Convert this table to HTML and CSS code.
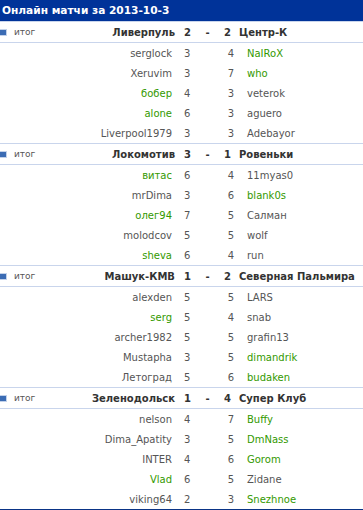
FILE: index.html
```html
<!DOCTYPE html>
<html>
<head>
<meta charset="utf-8">
<link rel="stylesheet" href="styles.css">
</head>
<body>
<div class="widget">
  <div class="title">Онлайн матчи за 2013-10-3</div>

  <div class="match">
    <div class="head"><span class="icon"></span><span class="label">итог</span><span class="home">Ливерпуль</span><span class="score"><span>2</span><span>-</span><span>2</span></span><span class="away">Центр-К</span></div>
    <div class="row"><span class="p1">serglock</span><span class="nums"><span>3</span><span>4</span></span><span class="p2 win">NaIRoX</span></div>
    <div class="row"><span class="p1">Xeruvim</span><span class="nums"><span>3</span><span>7</span></span><span class="p2 win">who</span></div>
    <div class="row"><span class="p1 win">бобер</span><span class="nums"><span>4</span><span>3</span></span><span class="p2">veterok</span></div>
    <div class="row"><span class="p1 win">alone</span><span class="nums"><span>6</span><span>3</span></span><span class="p2">aguero</span></div>
    <div class="row"><span class="p1">Liverpool1979</span><span class="nums"><span>3</span><span>3</span></span><span class="p2">Adebayor</span></div>
  </div>

  <div class="match">
    <div class="head"><span class="icon"></span><span class="label">итог</span><span class="home">Локомотив</span><span class="score"><span>3</span><span>-</span><span>1</span></span><span class="away">Ровеньки</span></div>
    <div class="row"><span class="p1 win">витас</span><span class="nums"><span>6</span><span>4</span></span><span class="p2">11myas0</span></div>
    <div class="row"><span class="p1">mrDima</span><span class="nums"><span>3</span><span>6</span></span><span class="p2 win">blank0s</span></div>
    <div class="row"><span class="p1 win">олег94</span><span class="nums"><span>7</span><span>5</span></span><span class="p2">Салман</span></div>
    <div class="row"><span class="p1">molodcov</span><span class="nums"><span>5</span><span>5</span></span><span class="p2">wolf</span></div>
    <div class="row"><span class="p1 win">sheva</span><span class="nums"><span>6</span><span>4</span></span><span class="p2">run</span></div>
  </div>

  <div class="match">
    <div class="head"><span class="icon"></span><span class="label">итог</span><span class="home">Машук-КМВ</span><span class="score"><span>1</span><span>-</span><span>2</span></span><span class="away">Северная Пальмира</span></div>
    <div class="row"><span class="p1">alexden</span><span class="nums"><span>5</span><span>5</span></span><span class="p2">LARS</span></div>
    <div class="row"><span class="p1 win">serg</span><span class="nums"><span>5</span><span>4</span></span><span class="p2">snab</span></div>
    <div class="row"><span class="p1">archer1982</span><span class="nums"><span>5</span><span>5</span></span><span class="p2">grafin13</span></div>
    <div class="row"><span class="p1">Mustapha</span><span class="nums"><span>3</span><span>5</span></span><span class="p2 win">dimandrik</span></div>
    <div class="row"><span class="p1">Летоград</span><span class="nums"><span>5</span><span>6</span></span><span class="p2 win">budaken</span></div>
  </div>

  <div class="match">
    <div class="head"><span class="icon"></span><span class="label">итог</span><span class="home">Зеленодольск</span><span class="score"><span>1</span><span>-</span><span>4</span></span><span class="away">Супер Клуб</span></div>
    <div class="row"><span class="p1">nelson</span><span class="nums"><span>4</span><span>7</span></span><span class="p2 win">Buffy</span></div>
    <div class="row"><span class="p1">Dima_Apatity</span><span class="nums"><span>3</span><span>5</span></span><span class="p2 win">DmNass</span></div>
    <div class="row"><span class="p1">INTER</span><span class="nums"><span>4</span><span>6</span></span><span class="p2 win">Gorom</span></div>
    <div class="row"><span class="p1 win">Vlad</span><span class="nums"><span>6</span><span>5</span></span><span class="p2">Zidane</span></div>
    <div class="row"><span class="p1">viking64</span><span class="nums"><span>2</span><span>3</span></span><span class="p2 win">Snezhnoe</span></div>
  </div>
</div>
</body>
</html>
```

FILE: styles.css
```css
html, body {
  margin: 0;
  padding: 0;
  background: #ffffff;
}

.widget {
  width: 363px;
  font-family: "DejaVu Sans", Verdana, sans-serif;
  font-size: 10px;
  color: #555555;
  border-bottom: 2px solid #0a3486;
}

.title {
  height: 21px;
  line-height: 21px;
  background: #003399;
  color: #ffffff;
  font-weight: bold;
  font-size: 10.6px;
  padding-left: 2px;
  white-space: nowrap;
}

.match {
  display: flex;
  flex-direction: column;
}

.head {
  display: grid;
  grid-template-columns: 14px 161px 64px 1fr;
  align-items: center;
  height: 20px;
  border-top: 1px solid #c9d5ec;
  border-bottom: 1px solid #c9d5ec;
  color: #333333;
  font-weight: bold;
  white-space: nowrap;
}

.icon {
  width: 6px;
  height: 5px;
  background: #3b6cb4;
  border: 1px solid #c3d2ea;
  border-left: none;
  margin-top: 1px;
}

.label {
  grid-column: 2;
  grid-row: 1;
  justify-self: start;
  font-weight: normal;
  color: #555555;
  font-size: 9px;
}

.home {
  grid-column: 2;
  grid-row: 1;
  justify-self: end;
}

.score {
  display: flex;
  justify-content: space-between;
  padding: 0 8px 0 9px;
}

.row {
  display: grid;
  grid-template-columns: 172px 75px 1fr;
  align-items: center;
  height: 20px;
  white-space: nowrap;
}

.p1 {
  text-align: right;
}

.nums {
  display: flex;
  justify-content: space-between;
  padding: 0 13px 0 12px;
}

.win {
  color: #339900;
}
```
